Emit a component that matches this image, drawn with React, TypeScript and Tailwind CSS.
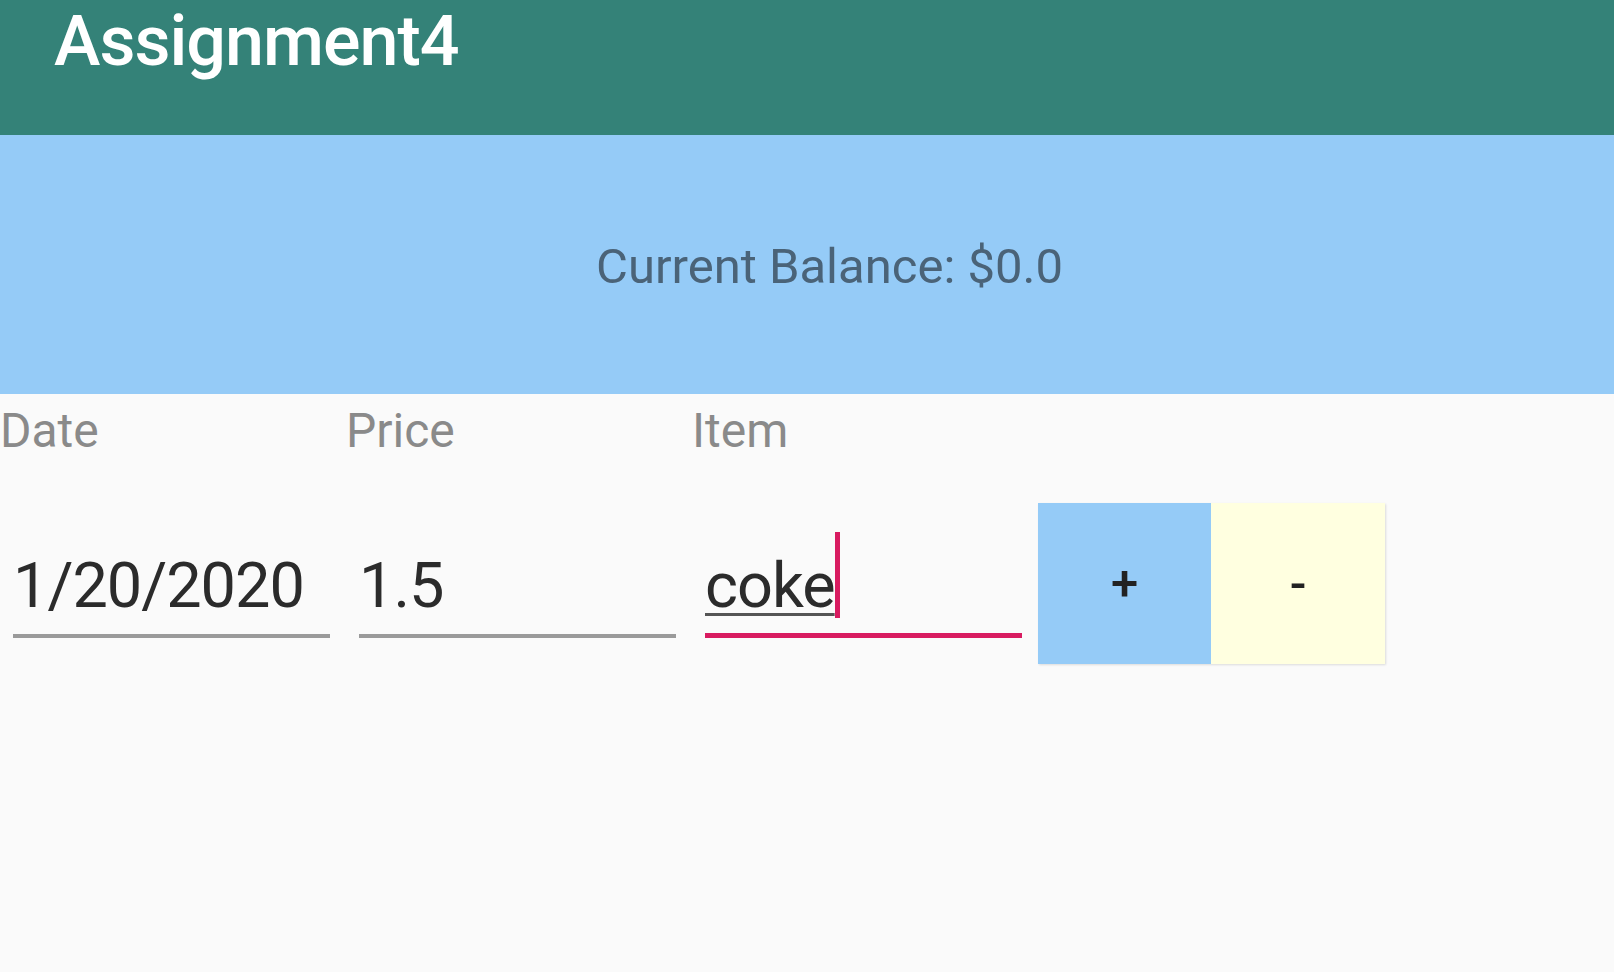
import React from 'react';

const font = { fontFamily: 'Roboto, "Noto Sans", sans-serif' };

function Field({ value, active }: { value: string; active?: boolean }) {
  return (
    <div className="w-[346px] pl-[13px] pr-[16px] flex flex-col">
      <div className="pt-[51px] text-[63px] leading-none tracking-[-1px] text-[#2b2b2b] whitespace-nowrap">
        {active ? (
          <span className="relative underline decoration-[3px] underline-offset-[6px] decoration-[#555]">
            {value}
            <span className="absolute left-full top-[-17px] h-[86px] w-[5px] bg-[#d81b60]" />
          </span>
        ) : (
          value
        )}
      </div>
      {active ? (
        <div className="mt-[16px] h-[5px] bg-[#d81b60]" />
      ) : (
        <div className="mt-[17px] h-[4px] bg-[#9a9a9a]" />
      )}
    </div>
  );
}

export default function App() {
  return (
    <div className="w-[1614px] h-[972px] bg-[#fafafa] overflow-hidden" style={font}>
      <div className="h-[135px] bg-[#348278] pl-[54px] pt-[6px]">
        <h1 className="text-[70px] leading-none tracking-[-1px] font-medium text-white">Assignment4</h1>
      </div>

      <div className="h-[259px] bg-[#95cbf7] flex items-center justify-center pl-[45px] pt-[3px]">
        <span className="text-[49px] leading-none text-[#4a6378]">Current Balance: $0.0</span>
      </div>

      <div className="h-[109px] flex pt-[13px] text-[48px] leading-none text-[#8a8a8a]">
        <div className="w-[346px]">Date</div>
        <div className="w-[346px]">Price</div>
        <div className="w-[346px]">Item</div>
      </div>

      <div className="flex items-start">
        <Field value="1/20/2020" />
        <Field value="1.5" />
        <Field value="coke" active />
        <div className="flex h-[161px] shadow-[1px_1px_2px_rgba(0,0,0,0.12)]">
          <button className="w-[173px] h-full bg-[#95cbf7] text-[49px] font-medium text-[#222] leading-none">
            +
          </button>
          <button className="w-[174px] h-full bg-[#ffffe0] text-[49px] font-medium text-[#222] leading-none">
            -
          </button>
        </div>
      </div>
    </div>
  );
}
